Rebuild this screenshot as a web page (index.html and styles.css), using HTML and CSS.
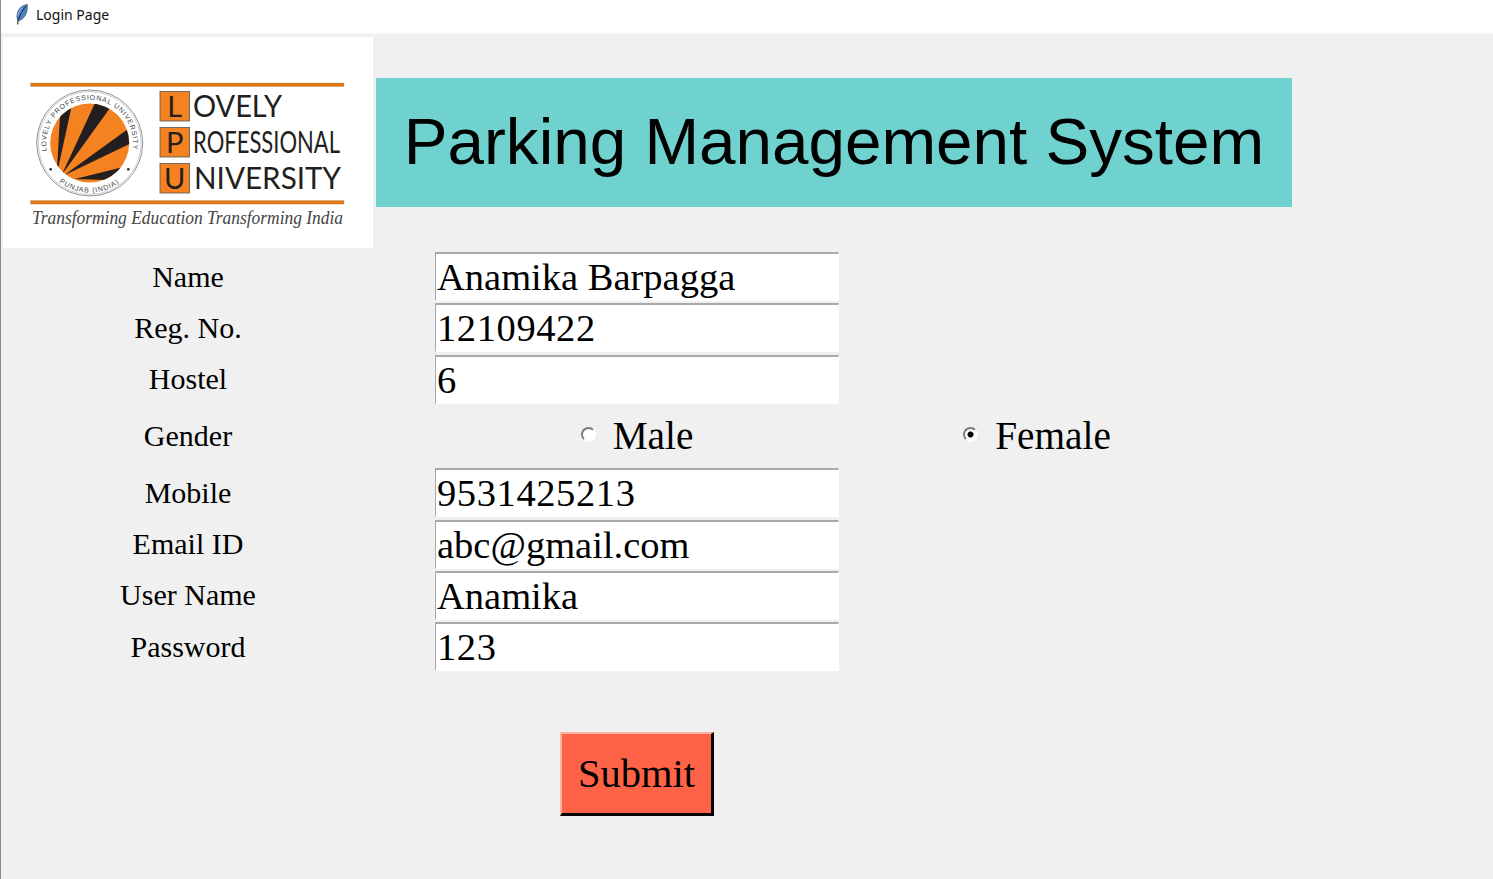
FILE: index.html
```html
<!DOCTYPE html>
<html>
<head>
  <meta charset="utf-8">
  <link rel="stylesheet" href="styles.css">
</head>
<body>
  <div class="titlebar">
    <svg class="feather" viewBox="0 0 14 21">
      <path d="M3.2 16 L2.6 20.5" fill="none" stroke="#333" stroke-width="1.2"/>
      <path d="M3 17 C0.8 12 2.6 6 6 3.2 C8 1.6 10 0.8 12.2 0.4 C12.8 5 11.6 9 9.8 12 C8 14.8 5.6 16.4 3 17 Z" fill="#4f86c6" stroke="#28405f" stroke-width="0.7"/>
      <path d="M3.6 15.5 C5 11 7.6 6 11 2" fill="none" stroke="#14294a" stroke-width="1"/>
      <path d="M3 11.5 C3.4 8.5 4.8 5.8 7 4" fill="none" stroke="#a8c8ee" stroke-width="0.8"/>
    </svg>
    <span class="window-title">Login Page</span>
  </div>

  <div class="window">
    <div class="header">
      <svg class="logo" viewBox="3 37 370 211">
        <defs>
          <clipPath id="disc"><circle cx="89.7" cy="143" r="39.5"/></clipPath>
          <path id="ringTop" d="M46.9 151 A43.5 43.5 0 1 1 132.5 151"/>
          <path id="ringBottom" d="M57 180.2 A49.5 49.5 0 0 0 122.4 180.2"/>
        </defs>
        <rect x="3" y="37" width="370" height="211" fill="#fff"/>

        <rect x="30.5" y="83" width="313.5" height="3.6" fill="#e2760f" stroke="#999" stroke-width="0.3"/>
        <rect x="30.5" y="200.5" width="313.5" height="3.6" fill="#e2760f" stroke="#999" stroke-width="0.3"/>

        <circle cx="89.7" cy="143" r="53" fill="#fff" stroke="#777" stroke-width="0.8"/>
        <circle cx="89.7" cy="143" r="51.5" fill="#fff" stroke="#aaa" stroke-width="0.6"/>
        <circle cx="89.7" cy="143" r="39.5" fill="#f58220"/>
        <g clip-path="url(#disc)" fill="#231f20">
          <polygon points="56.7,175 60,116 71.7,106"/>
          <polygon points="61.7,175 95,103 110,108"/>
          <polygon points="63.3,175.7 128,129 131,143.3"/>
          <polygon points="75,179 123,167 106.7,180"/>
        </g>
        <circle cx="50.7" cy="169.3" r="1.3" fill="#231f20"/>
        <circle cx="128.3" cy="169.3" r="1.3" fill="#231f20"/>
        <text class="ring-text"><textPath href="#ringTop" textLength="150">LOVELY PROFESSIONAL UNIVERSITY</textPath></text>
        <text class="ring-text"><textPath href="#ringBottom" startOffset="4%" textLength="64">PUNJAB (INDIA)</textPath></text>

        <g fill="#f58220" stroke="#555" stroke-width="0.8">
          <rect x="160" y="91.5" width="29.5" height="29.5"/>
          <rect x="160" y="127.5" width="29.5" height="29.5"/>
          <rect x="160" y="163.5" width="29.5" height="29.5"/>
        </g>
        <text class="logo-cap" x="174.7" y="117" text-anchor="middle">L</text>
        <text class="logo-cap" x="174.7" y="153" text-anchor="middle">P</text>
        <text class="logo-cap" x="174.7" y="189" text-anchor="middle">U</text>
        <text class="logo-word" x="193" y="117" textLength="89" lengthAdjust="spacingAndGlyphs">OVELY</text>
        <text class="logo-word" x="193" y="153" textLength="147" lengthAdjust="spacingAndGlyphs">ROFESSIONAL</text>
        <text class="logo-word" x="194" y="189" textLength="147" lengthAdjust="spacingAndGlyphs">NIVERSITY</text>
        <text class="logo-tagline" x="32" y="224" textLength="311" lengthAdjust="spacingAndGlyphs">Transforming Education Transforming India</text>
      </svg>
      <div class="banner">Parking Management System</div>
    </div>

    <form class="form">
      <label class="label">Name</label>
      <input class="entry" type="text" value="Anamika Barpagga">
      <label class="label">Reg. No.</label>
      <input class="entry entry-number" type="text" value="12109422">
      <label class="label">Hostel</label>
      <input class="entry" type="text" value="6">

      <label class="label">Gender</label>
      <label class="radio-option">
        <input class="radio" type="radio" name="gender">
        <span>Male</span>
      </label>
      <label class="radio-option">
        <input class="radio" type="radio" name="gender" checked>
        <span>Female</span>
      </label>

      <label class="label">Mobile</label>
      <input class="entry entry-number" type="text" value="9531425213">
      <label class="label">Email ID</label>
      <input class="entry" type="text" value="abc@gmail.com">
      <label class="label">User Name</label>
      <input class="entry" type="text" value="Anamika">
      <label class="label">Password</label>
      <input class="entry entry-number" type="text" value="123">

      <button class="submit" type="button">Submit</button>
    </form>
  </div>
</body>
</html>
```

FILE: styles.css
```css
html, body {
  margin: 0;
  height: 100%;
  overflow: hidden;
}

body {
  background-color: #f0f0f0;
  border-left: 1px solid #8c8c8c;
  box-sizing: border-box;
  font-family: "Liberation Serif", serif;
}

.titlebar {
  display: flex;
  align-items: center;
  height: 34px;
  padding: 0 0 4px 14px;
  background-color: #fff;
  border-bottom: 1px solid #f5f5f5;
  box-sizing: border-box;
}

.feather {
  width: 14px;
  height: 21px;
  margin-right: 7px;
}

.window-title {
  font-family: "Noto Sans", sans-serif;
  font-size: 14px;
  color: #111;
}

.header {
  display: flex;
  align-items: flex-start;
  padding: 3px 0 0 2px;
}

.logo {
  display: block;
  width: 370px;
  height: 211px;
}

.banner {
  display: flex;
  align-items: center;
  justify-content: center;
  width: 916px;
  height: 129px;
  margin: 41px 0 0 3px;
  padding-bottom: 3px;
  box-sizing: border-box;
  background-color: #70d2cf;
  font-family: "Liberation Sans", sans-serif;
  font-size: 65.6px;
  color: #000;
}

.ring-text {
  font-family: "Liberation Sans", sans-serif;
  font-size: 7px;
  fill: #444;
}

.logo-cap {
  font-family: Lato, sans-serif;
  font-size: 29px;
  fill: #231f20;
}

.logo-word {
  font-family: Lato, sans-serif;
  font-size: 30px;
  fill: #231f20;
}

.logo-tagline {
  font-family: "Liberation Serif", serif;
  font-style: italic;
  font-size: 19px;
  fill: #444;
}

.form {
  display: grid;
  grid-template-columns: 374px 404px 276px;
  grid-template-rows: repeat(3, 49px) 59.6px repeat(4, 49px) auto;
  column-gap: 60px;
  row-gap: 2.4px;
  margin-top: 4px;
}

.label {
  grid-column: 1;
  display: flex;
  align-items: center;
  justify-content: center;
  font-size: 30px;
  color: #000;
}

.entry {
  grid-column: 2;
  width: 100%;
  height: 49px;
  padding: 0 1px;
  box-sizing: border-box;
  background-color: #fff;
  border-style: solid;
  border-width: 2px 1px 1px 1px;
  border-color: #a9a9a9 #fff #fff #a9a9a9;
  border-radius: 0;
  outline: none;
  font-family: "Liberation Serif", serif;
  font-size: 38.5px;
  color: #000;
}

.entry-number {
  letter-spacing: 0.6px;
}

.radio-option {
  display: flex;
  align-items: center;
  justify-content: center;
  gap: 17px;
  font-size: 39.3px;
  color: #000;
}

.radio {
  appearance: none;
  width: 15px;
  height: 15px;
  margin: 0 0 3px;
  box-sizing: border-box;
  background-color: #fff;
  border: 2px solid;
  border-color: #7a7a7a #fff #fff #7a7a7a;
  border-radius: 50%;
}

.radio:checked {
  background-image: radial-gradient(circle, #000 0, #000 2.5px, #fff 3.5px);
}

.submit {
  grid-column: 2;
  justify-self: center;
  width: 154px;
  height: 84px;
  margin-top: 58px;
  padding: 0;
  box-sizing: border-box;
  background-color: #ff6347;
  border-style: solid;
  border-width: 2px 3px 3px 2px;
  border-color: #ffb1a3 #000 #000 #ffb1a3;
  font-family: "Liberation Serif", serif;
  font-size: 40.5px;
  color: #000;
}
```
